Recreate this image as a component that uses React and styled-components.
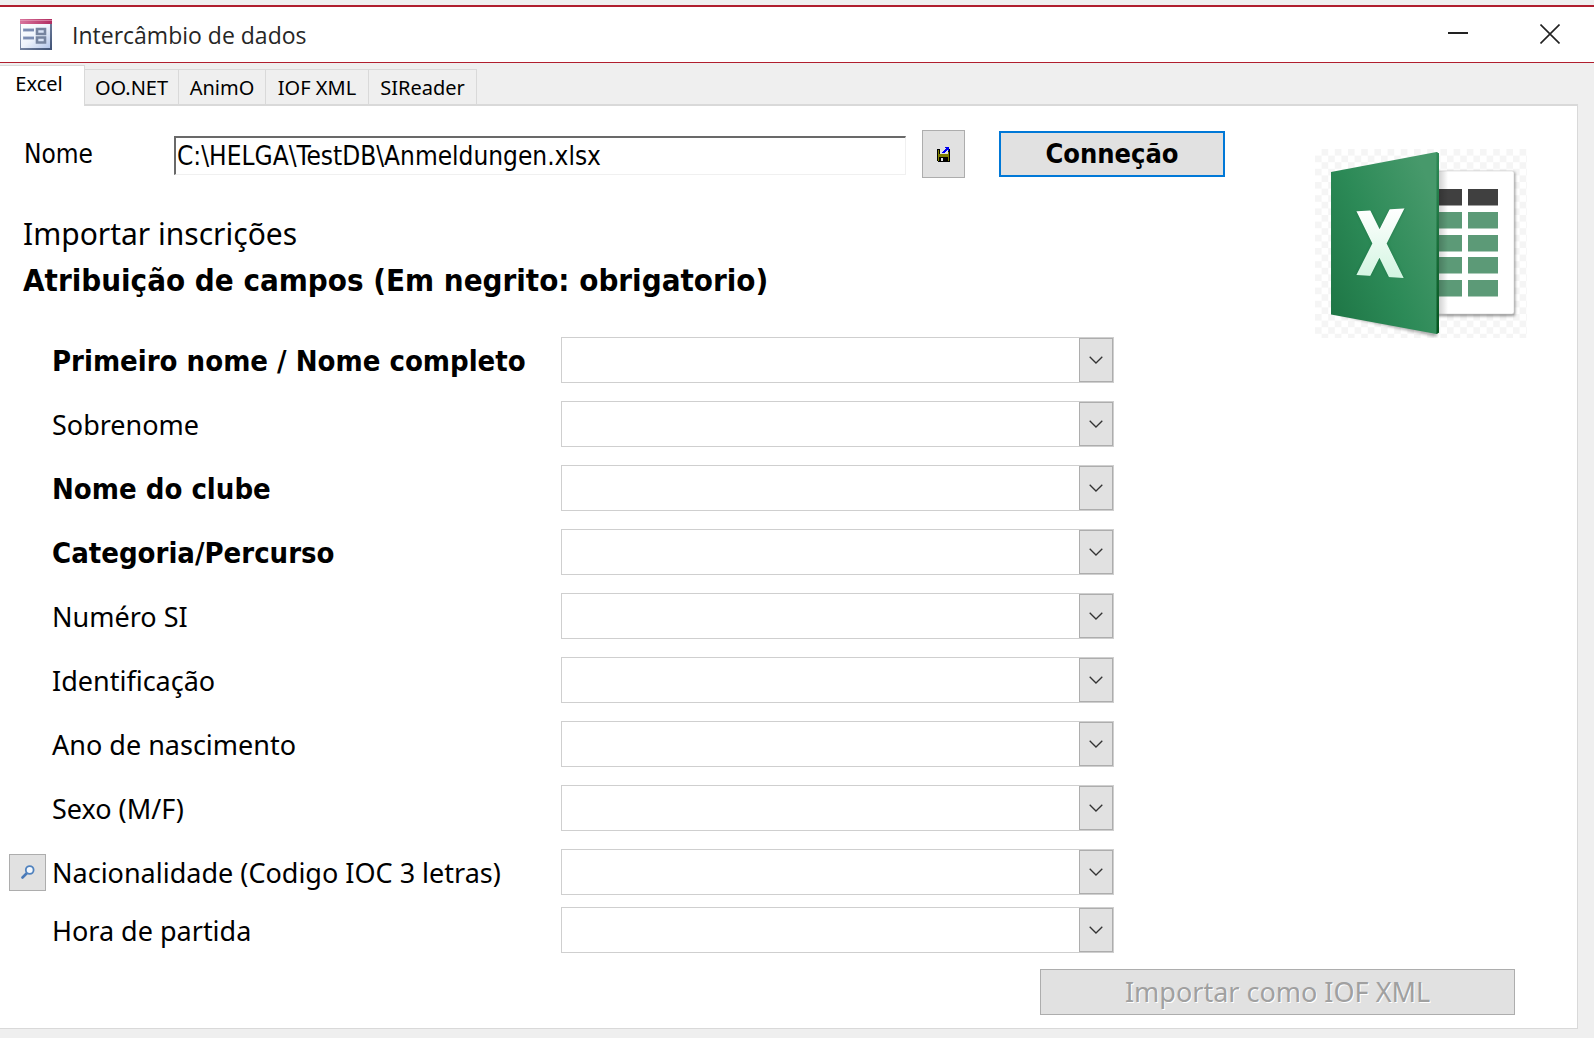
import React from "react";
import styled, { createGlobalStyle } from "styled-components";

const UI = `"Noto Sans", "Open Sans", sans-serif`;
const CONDENSED = `"DejaVu Sans Condensed", "Noto Sans", sans-serif`;
const TITLE = `"Open Sans", "Noto Sans", sans-serif`;

const GlobalStyle = createGlobalStyle`
  *, *::before, *::after { box-sizing: border-box; }
  body { margin: 0; background: #efefef; color: #000; font-family: ${UI}; }
  button, input, select { font-family: inherit; border-radius: 0; margin: 0; }
`;

const Window = styled.div`
  display: flex;
  flex-direction: column;
  min-height: 100vh;
  padding: 5px 0 9px;
`;

const TitleBar = styled.header`
  display: flex;
  align-items: center;
  height: 58px;
  padding: 0 20px;
  background: #fff;
  border-top: 2px solid #b01e2e;
  border-bottom: 1px solid #b01e2e;
`;

const Title = styled.h1`
  flex: 1;
  margin: 0 0 0 20px;
  font: 400 23px/32px ${TITLE};
  color: #262626;
`;

const WindowButton = styled.button`
  display: grid;
  place-items: center;
  width: 48px;
  height: 40px;
  margin-left: 44px;
  padding: 0 0 2px;
  border: 0;
  background: transparent;
`;

const TabList = styled.div`
  display: flex;
  align-items: flex-end;
  height: 43px;
  padding-top: 2px;
  margin-right: 16px;
  border-bottom: 2px solid #d9d9d9;
`;

const Tab = styled.button`
  width: ${(p) => p.$width}px;
  height: 35px;
  padding: 2px 0 0;
  border: 1px solid #d9d9d9;
  border-width: 1px 1px 0 0;
  background: #efefef;
  color: #000;
  font-size: 20px;
  line-height: 32px;
  white-space: nowrap;

  &[aria-selected="true"] {
    height: 41px;
    margin-bottom: -2px;
    padding: 0 6px 4px 0;
    background: #fff;
  }
`;

const Panel = styled.main`
  display: grid;
  grid-template-columns: minmax(0, 1fr) 212px;
  grid-template-rows: auto 1fr;
  column-gap: 90px;
  flex: 1;
  margin-right: 16px;
  padding: 24px 50px 13px 9px;
  background: #fff;
  border: 1px solid #d9d9d9;
  border-width: 0 1px 1px 0;
`;

const Source = styled.div`
  display: flex;
  align-items: center;
  height: 48px;
  padding-left: 15px;
`;

const Label = styled.label`
  padding-top: 2px;
  font-family: ${(p) => (p.$required ? CONDENSED : UI)};
  font-size: ${(p) => (p.$required ? 29 : 27)}px;
  line-height: 40px;
  font-weight: ${(p) => (p.$required ? 700 : 400)};
  white-space: nowrap;
`;

const SourceLabel = styled.label`
  width: 150px;
  font: 400 26px/40px ${CONDENSED};
`;

const PathInput = styled.input`
  flex: 1;
  min-width: 0;
  height: 39px;
  margin-top: 2px;
  padding: 0 1px;
  border: 1px solid #f0f0f0;
  border-top: 2px solid #696969;
  border-left: 2px solid #696969;
  background: #fff;
  color: #000;
  font: 400 26px/36px ${CONDENSED};
  outline: 0;
`;

const Button = styled.button`
  display: grid;
  place-items: center;
  padding: 0;
  border: 1px solid #adadad;
  background: #e1e1e1;
  color: #000;
  font-size: 27px;
  line-height: 40px;
`;

const BrowseButton = styled(Button)`
  width: 43px;
  height: 48px;
  margin: 0 34px 0 16px;
`;

const ConnectButton = styled(Button)`
  width: 226px;
  height: 46px;
  border: 2px solid #0078d7;
  font-family: ${CONDENSED};
  font-weight: 700;
`;

const LookupButton = styled(Button)`
  width: 37px;
  height: 37px;
`;

const Headings = styled.div`
  padding: 33px 0 34px 14px;
`;

const Heading = styled.h2`
  margin: 0;
  font-family: ${(p) => (p.$strong ? CONDENSED : UI)};
  font-size: ${(p) => (p.$strong ? 31 : 30)}px;
  line-height: 46px;
  font-weight: ${(p) => (p.$strong ? 700 : 400)};
  white-space: nowrap;
`;

const Fields = styled.div`
  display: flex;
  flex-direction: column;
  gap: 18px;
  padding-right: 111px;
`;

const FieldRow = styled.div`
  display: grid;
  grid-template-columns: 37px 503px minmax(0, 1fr);
  column-gap: 6px;
  align-items: center;
  height: 46px;

  &:last-child { margin-top: -6px; }
`;

const Combo = styled.div`
  display: grid;
  height: 46px;
`;

const ComboSelect = styled.select`
  grid-area: 1 / 1;
  appearance: none;
  width: 100%;
  padding: 0 40px 0 6px;
  border: 1px solid #cfcfcf;
  background: #fff;
  font-size: 27px;
  outline: 0;
`;

const ComboArrow = styled.span`
  grid-area: 1 / 1;
  justify-self: end;
  display: grid;
  place-items: center;
  width: 34px;
  margin: 1px;
  border: 1px solid #adadad;
  background: #e1e1e1;
  pointer-events: none;
`;

const LogoCell = styled.div`
  grid-row: 1 / 3;
  grid-column: 2;
  padding-top: 19px;
`;

const Footer = styled.footer`
  grid-column: 1 / -1;
  display: flex;
  justify-content: flex-end;
  align-items: flex-end;
  padding: 15px 12px 0 0;
`;

const ImportButton = styled(Button)`
  width: 475px;
  height: 46px;

  &:disabled {
    color: #a0a0a0;
    text-shadow: 1px 1px 0 #fff;
  }
`;

const FormIcon = () => (
  <svg width="32" height="31" viewBox="0 0 32 31" aria-hidden="true">
    <defs>
      <linearGradient id="formBody" x1="0" y1="0" x2="1" y2="1">
        <stop offset="0" stopColor="#ffffff" />
        <stop offset="0.5" stopColor="#eef3fc" />
        <stop offset="1" stopColor="#b4c6ea" />
      </linearGradient>
      <linearGradient id="formHead" x1="0" y1="0" x2="1" y2="0">
        <stop offset="0" stopColor="#d9749d" />
        <stop offset="1" stopColor="#b02c60" />
      </linearGradient>
      <linearGradient id="formEdge" x1="0" y1="0" x2="1" y2="1">
        <stop offset="0" stopColor="#a9b4cc" />
        <stop offset="1" stopColor="#3d5074" />
      </linearGradient>
    </defs>
    <rect width="32" height="31" fill="url(#formEdge)" />
    <rect x="1" y="5" width="29" height="24" fill="url(#formBody)" />
    <rect width="32" height="5" fill="url(#formHead)" />
    <rect y="1" width="32" height="1" fill="#e8a8c2" opacity="0.6" />
    <path d="M3 11h11M3 19h11" stroke="#8c9cbd" strokeWidth="3" />
    <path d="M4 11h10M4 19h10" stroke="#6b7da6" strokeWidth="1" />
    <path d="M17 10h8v5h-8zM17 18.500h8v5h-8z" fill="#d8e2f5" stroke="#76849f" strokeWidth="2.600" />
  </svg>
);

const MinimizeIcon = () => (
  <svg width="20" height="20" viewBox="0 0 20 20" aria-hidden="true">
    <path d="M0 9h20" stroke="#222" strokeWidth="2" />
  </svg>
);

const CloseIcon = () => (
  <svg width="20" height="20" viewBox="0 0 20 20" aria-hidden="true">
    <path d="M0.500 0.500l19 19M19.500 0.500l-19 19" stroke="#222" strokeWidth="1.600" />
  </svg>
);

const SaveIcon = () => (
  <svg width="13" height="15" viewBox="0 0 13 15" shapeRendering="crispEdges" aria-hidden="true">
    <path d="M0 2h13v13H1v-1H0z" fill="#000" />
    <path d="M1 3h1v11H1zM1 7h11v3H1zM11 5h1v9h-1z" fill="#808000" />
    <path d="M3 2h8v5H3z" fill="#e1e1e1" />
    <path d="M4 11h2v3H4z" fill="#e1e1e1" />
    <path d="M8 0h4v4h-1V3h-1v1H9v1H8v1H5V5h1V4h1V3h1V2h1V1H8z" fill="#0000f0" />
  </svg>
);

const SearchIcon = () => (
  <svg width="14" height="14" viewBox="0 0 14 14" aria-hidden="true">
    <path d="M1.500 12.500L6 8" stroke="#4a7ab8" strokeWidth="2.600" strokeLinecap="round" />
    <circle cx="8.700" cy="5" r="3.900" fill="#f4f8fd" stroke="#5082be" strokeWidth="1.800" />
  </svg>
);

const ChevronIcon = () => (
  <svg width="14" height="8" viewBox="0 0 14 8" aria-hidden="true">
    <path d="M0.700 0.700L7 7l6.300-6.300" fill="none" stroke="#333" strokeWidth="1.300" />
  </svg>
);

const cellRows = [40, 63, 86, 108, 131];

const ExcelLogo = () => (
  <svg width="212" height="189" viewBox="0 0 212 189" role="img" aria-label="Excel">
    <defs>
      <pattern id="checker" width="13.200" height="13.200" patternUnits="userSpaceOnUse">
        <path d="M6.600 0h6.600v6.600h-6.600zM0 6.600h6.600v6.600H0z" fill="#f5f5f5" />
      </pattern>
      <linearGradient id="door" x1="0" y1="1" x2="1" y2="0.300">
        <stop offset="0" stopColor="#1d7444" />
        <stop offset="0.500" stopColor="#2c8a57" />
        <stop offset="1" stopColor="#47996b" />
      </linearGradient>
      <linearGradient id="edge" x1="0" y1="0" x2="0" y2="1">
        <stop offset="0" stopColor="#2f8a58" />
        <stop offset="1" stopColor="#05541f" />
      </linearGradient>
      <linearGradient id="mark" gradientUnits="userSpaceOnUse" x1="0" y1="60" x2="0" y2="129">
        <stop offset="0" stopColor="#ffffff" />
        <stop offset="1" stopColor="#d3f5e1" />
      </linearGradient>
      <linearGradient id="shade" x1="0" y1="0" x2="1" y2="0">
        <stop offset="0" stopColor="#000" stopOpacity="0.180" />
        <stop offset="1" stopColor="#000" stopOpacity="0" />
      </linearGradient>
      <filter id="soft" x="-10%" y="-10%" width="120%" height="120%">
        <feGaussianBlur stdDeviation="1.500" />
      </filter>
      <clipPath id="markClip">
        <path d="M38 62.600L92 59.200V129.200L38 125.800z" />
      </clipPath>
    </defs>
    <rect width="212" height="189" fill="url(#checker)" />
    <path d="M22 166L122 188V176z" fill="#000" opacity="0.300" filter="url(#soft)" />
    <rect x="110" y="23" width="90" height="144" rx="2" fill="#000" opacity="0.450" filter="url(#soft)" />
    <rect x="110" y="22" width="89" height="143" rx="2" fill="#fff" stroke="#d4d4d4" strokeWidth="0.600" />
    {cellRows.map((y, i) => (
      <g key={y} fill={i === 0 ? "#404040" : "#5c9a77"}>
        <rect x="120" y={y} width="27" height="16.500" />
        <rect x="153" y={y} width="30" height="16.500" />
      </g>
    ))}
    <rect x="124" y="22" width="9" height="143" fill="url(#shade)" />
    <path d="M16 23L121.500 3 124 4.500V183.500L121.500 185 16 165.500z" fill="url(#door)" />
    <path d="M121.500 3L124 4.500V183.500L121.500 185z" fill="url(#edge)" />
    <g clipPath="url(#markClip)" strokeWidth="12.800">
      <path d="M45 55L86 138M86 52L44 135" stroke="#0c5a30" opacity="0.350" filter="url(#soft)" />
      <path d="M45 55L86 138M86 52L44 135" stroke="url(#mark)" />
    </g>
  </svg>
);

const tabs = [
  { name: "Excel", width: 85 },
  { name: "OO.NET", width: 94 },
  { name: "AnimO", width: 87 },
  { name: "IOF XML", width: 103 },
  { name: "SIReader", width: 108 },
];

const fields = [
  { id: "first", label: "Primeiro nome / Nome completo", required: true },
  { id: "last", label: "Sobrenome" },
  { id: "club", label: "Nome do clube", required: true },
  { id: "category", label: "Categoria/Percurso", required: true },
  { id: "si", label: "Numéro SI" },
  { id: "ident", label: "Identificação" },
  { id: "birth", label: "Ano de nascimento" },
  { id: "sex", label: "Sexo (M/F)" },
  { id: "nation", label: "Nacionalidade (Codigo IOC 3 letras)", lookup: true },
  { id: "start", label: "Hora de partida" },
];

const Field = ({ id, label, required, lookup }) => (
  <FieldRow>
    {lookup ? (
      <LookupButton type="button" aria-label="Procurar"><SearchIcon /></LookupButton>
    ) : (
      <span />
    )}
    <Label htmlFor={id} $required={required}>{label}</Label>
    <Combo>
      <ComboSelect id={id} defaultValue="">
        <option value="" />
      </ComboSelect>
      <ComboArrow><ChevronIcon /></ComboArrow>
    </Combo>
  </FieldRow>
);

export default function App() {
  return (
    <Window>
      <GlobalStyle />
      <TitleBar>
        <FormIcon />
        <Title>Intercâmbio de dados</Title>
        <WindowButton type="button" aria-label="Minimizar"><MinimizeIcon /></WindowButton>
        <WindowButton type="button" aria-label="Fechar"><CloseIcon /></WindowButton>
      </TitleBar>
      <TabList role="tablist">
        {tabs.map((tab, i) => (
          <Tab key={tab.name} type="button" role="tab" aria-selected={i === 0} $width={tab.width}>
            {tab.name}
          </Tab>
        ))}
      </TabList>
      <Panel>
        <div>
          <Source>
            <SourceLabel htmlFor="path">Nome</SourceLabel>
            <PathInput id="path" type="text" defaultValue="C:\HELGA\TestDB\Anmeldungen.xlsx" />
            <BrowseButton type="button" aria-label="Abrir ficheiro"><SaveIcon /></BrowseButton>
            <ConnectButton type="button">Conneção</ConnectButton>
          </Source>
          <Headings>
            <Heading>Importar inscrições</Heading>
            <Heading $strong>Atribuição de campos (Em negrito: obrigatorio)</Heading>
          </Headings>
          <Fields>
            {fields.map((field) => <Field key={field.id} {...field} />)}
          </Fields>
        </div>
        <LogoCell><ExcelLogo /></LogoCell>
        <Footer>
          <ImportButton type="button" disabled>Importar como IOF XML</ImportButton>
        </Footer>
      </Panel>
    </Window>
  );
}
